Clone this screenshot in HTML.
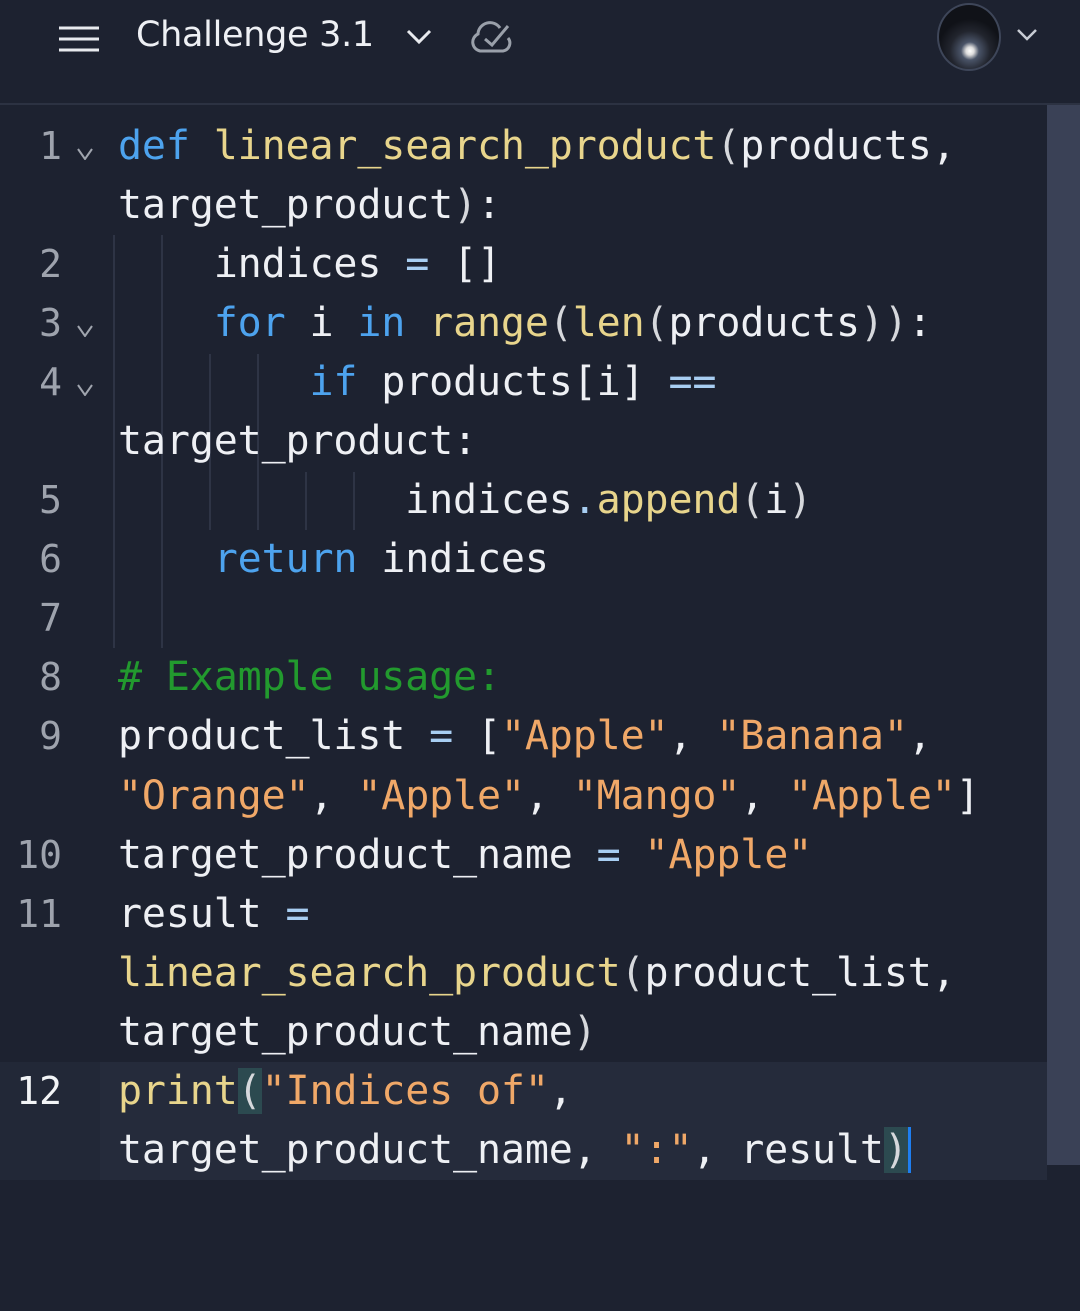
<!DOCTYPE html>
<html><head><meta charset="utf-8"><style>
html,body{margin:0;padding:0;}
body{width:1080px;height:1311px;background:#1d2230;position:relative;overflow:hidden;font-family:"DejaVu Sans Mono","Liberation Mono",monospace;}
.hdr{position:absolute;left:0;top:0;width:1080px;height:103px;background:#1d2230;border-bottom:2px solid #2c3242;}
.title{position:absolute;left:136px;top:15px;font-family:"DejaVu Sans","Liberation Sans",sans-serif;font-size:35px;color:#eef0f4;letter-spacing:-0.3px;}
.row{position:absolute;left:0;height:59px;line-height:59px;width:1047px;}
.ln{position:absolute;left:0;width:62px;text-align:right;font-size:38px;color:#9ea3ad;}
.code{position:absolute;left:118px;font-size:40px;letter-spacing:-0.15px;color:#eef0f4;white-space:pre;}
.k{color:#4da3ee}.f{color:#e8d58c}.s{color:#f0a868}.c{color:#229a2e}.o{color:#a8cef2}.p{color:#d6d8dc}
.chev{position:absolute;left:77px;width:16px;height:12px;}
.g{position:absolute;width:2px;background:#2e3445;}
</style></head><body>
<div class="hdr">
  <svg style="position:absolute;left:58px;top:25px" width="42" height="28"><g stroke="#e8eaee" stroke-width="3"><line x1="1" y1="3" x2="41" y2="3"/><line x1="1" y1="14" x2="41" y2="14"/><line x1="1" y1="25" x2="41" y2="25"/></g></svg>
  <div class="title">Challenge 3.1</div>
  <svg style="position:absolute;left:406px;top:28px" width="28" height="18"><polyline points="2,3 13,14 24,3" fill="none" stroke="#e8eaee" stroke-width="3"/></svg>
  <svg style="position:absolute;left:470px;top:20px" width="46" height="36"><path d="M30 8 A12 12 0 0 0 8 14 A9 9 0 0 0 10 31 L33 31 A8 8 0 0 0 38 18" fill="none" stroke="#9aa0aa" stroke-width="3"/><polyline points="15,19 22,25 38,6" fill="none" stroke="#9aa0aa" stroke-width="3"/></svg>
  <div style="position:absolute;left:937px;top:3px;width:64px;height:68px;border-radius:50%;background:radial-gradient(circle at 31px 46px,#fff 0,#ddd 4px,#4a5468 9px,#22252e 20px,#101218 32px);border:2px solid #3e4659;box-sizing:border-box;"></div>
  <svg style="position:absolute;left:1016px;top:28px" width="22" height="14"><polyline points="2,2 11,11 20,2" fill="none" stroke="#c8ccd4" stroke-width="2.5"/></svg>
</div>
<div style="position:absolute;left:1047px;top:105px;width:33px;height:1060px;background:#3a4156;"></div>
<div style="position:absolute;left:0;top:1062px;width:100px;height:118px;background:#222837;"></div>
<div style="position:absolute;left:100px;top:1062px;width:947px;height:118px;background:#252b3b;"></div>

<div class="g" style="left:113px;top:235px;height:413px"></div>
<div class="g" style="left:161px;top:235px;height:413px"></div>
<div class="g" style="left:209px;top:354px;height:176px"></div>
<div class="g" style="left:257px;top:354px;height:176px"></div>
<div class="g" style="left:305px;top:472px;height:58px"></div>
<div class="g" style="left:353px;top:472px;height:58px"></div>

<div class="row" style="top:117px"><div class="ln">1</div><svg class="chev" style="top:31px" viewBox="0 0 16 12"><polyline points="1,1 8,11 15,1" fill="none" stroke="#a0a5ae" stroke-width="2"/></svg><div class="code"><span class="k">def</span> <span class="f">linear_search_product</span><span class="p">(</span>products,</div></div>
<div class="row" style="top:176px"><div class="code">target_product<span class="p">)</span>:</div></div>
<div class="row" style="top:235px"><div class="ln">2</div><div class="code">    indices <span class="o">=</span> []</div></div>
<div class="row" style="top:294px"><div class="ln">3</div><svg class="chev" style="top:31px" viewBox="0 0 16 12"><polyline points="1,1 8,11 15,1" fill="none" stroke="#a0a5ae" stroke-width="2"/></svg><div class="code">    <span class="k">for</span> i <span class="k">in</span> <span class="f">range</span><span class="p">(</span><span class="f">len</span><span class="p">(</span>products<span class="p">))</span>:</div></div>
<div class="row" style="top:353px"><div class="ln">4</div><svg class="chev" style="top:31px" viewBox="0 0 16 12"><polyline points="1,1 8,11 15,1" fill="none" stroke="#a0a5ae" stroke-width="2"/></svg><div class="code">        <span class="k">if</span> products[i] <span class="o">==</span></div></div>
<div class="row" style="top:412px"><div class="code">target_product:</div></div>
<div class="row" style="top:471px"><div class="ln">5</div><div class="code">            indices<span class="o">.</span><span class="f">append</span><span class="p">(</span>i<span class="p">)</span></div></div>
<div class="row" style="top:530px"><div class="ln">6</div><div class="code">    <span class="k">return</span> indices</div></div>
<div class="row" style="top:589px"><div class="ln">7</div></div>
<div class="row" style="top:648px"><div class="ln">8</div><div class="code"><span class="c"># Example usage:</span></div></div>
<div class="row" style="top:707px"><div class="ln">9</div><div class="code">product_list <span class="o">=</span> [<span class="s">"Apple"</span>, <span class="s">"Banana"</span>,</div></div>
<div class="row" style="top:767px"><div class="code"><span class="s">"Orange"</span>, <span class="s">"Apple"</span>, <span class="s">"Mango"</span>, <span class="s">"Apple"</span>]</div></div>
<div class="row" style="top:826px"><div class="ln">10</div><div class="code">target_product_name <span class="o">=</span> <span class="s">"Apple"</span></div></div>
<div class="row" style="top:885px"><div class="ln">11</div><div class="code">result <span class="o">=</span></div></div>
<div class="row" style="top:944px"><div class="code"><span class="f">linear_search_product</span><span class="p">(</span>product_list,</div></div>
<div class="row" style="top:1003px"><div class="code">target_product_name<span class="p">)</span></div></div>
<div class="row" style="top:1062px"><div class="ln" style="color:#f2f4f6">12</div><div class="code"><span class="f">print</span><span class="p" style="background:#2c4a50">(</span><span class="s">"Indices of"</span>,</div></div>
<div class="row" style="top:1121px"><div class="code">target_product_name, <span class="s">":"</span>, result<span class="p" style="background:#2c4a50;box-shadow:3px 0 0 #1e7ef0">)</span></div></div>
</body></html>
